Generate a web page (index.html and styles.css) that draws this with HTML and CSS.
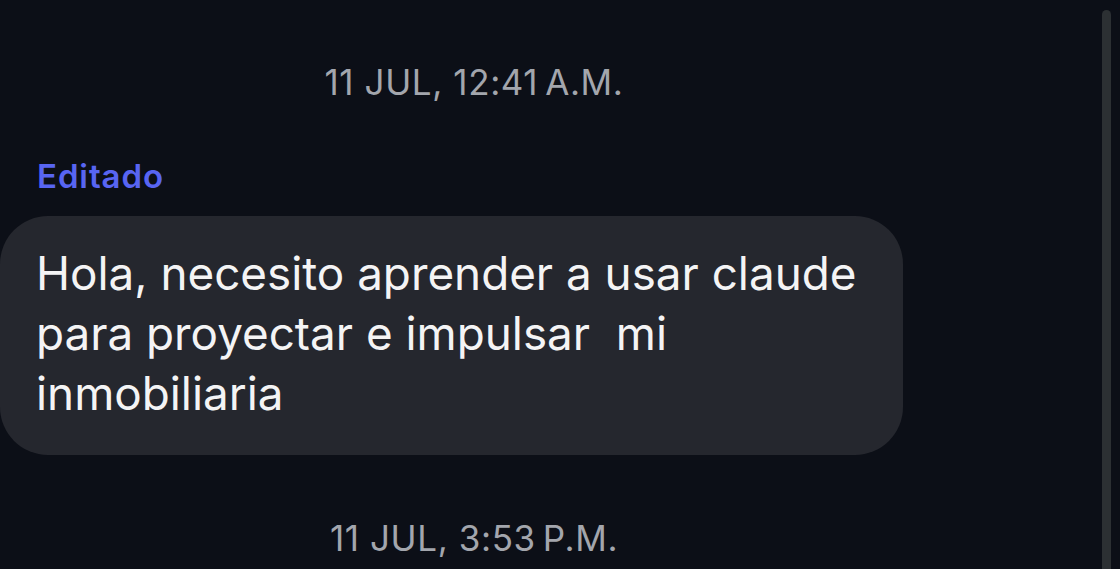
FILE: index.html
```html
<!DOCTYPE html>
<html lang="es">
<head>
    <meta charset="UTF-8" />
    <title>Chat</title>
    <link rel="stylesheet" href="styles.css">
</head>
<body>
    <div class="chat">
        <div class="timestamp">11 JUL, 12:41&#8239;A.M.</div>

        <div class="edited">Editado</div>
        <div class="bubble">Hola, necesito aprender a usar claude para proyectar e impulsar  mi inmobiliaria</div>

        <div class="timestamp second">11 JUL, 3:53&#8239;P.M.</div>
    </div>

    <!-- barra de desplazamiento -->
    <div class="scrollbar"></div>
</body>
</html>
```

FILE: styles.css
```css
body {
    margin: 0;
    background: #0c0f17;
    font-family: 'Inter', 'Liberation Sans', sans-serif;
    overflow: hidden;
}

.chat {
    width: 948px;
    padding-top: 62px;
}

.timestamp {
    text-align: center;
    font-size: 35px;
    line-height: 40px;
    letter-spacing: 0.6px;
    color: #a3a6ad;
}

.timestamp.second {
    margin-top: 63px;
}

.edited {
    margin-top: 56px;
    padding-left: 37px;
    font-size: 33px;
    line-height: 36px;
    letter-spacing: 0.9px;
    font-weight: 600;
    color: #5865f2;
}

.bubble {
    margin-top: 22px;
    width: 903px;
    box-sizing: border-box;
    padding: 28px 30px 31px 36px;
    background: #25272e;
    border-radius: 48px;
    color: #f4f4f5;
    font-size: 45.8px;
    line-height: 60px;
    white-space: pre-wrap;
}

.scrollbar {
    position: fixed;
    top: 10px;
    bottom: 0;
    right: 9px;
    width: 9px;
    background: #2c3033;
    border-radius: 5px 5px 0 0;
}
```
